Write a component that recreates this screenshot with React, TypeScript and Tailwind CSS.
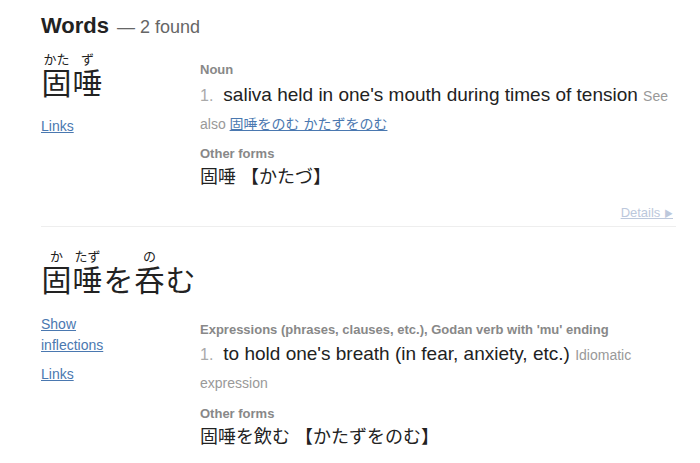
const latin = "font-['Liberation_Sans','Noto_Sans_CJK_JP',sans-serif]";

type Ruby = { kanji: string; kana?: string };

const entry1: Ruby[] = [
  { kanji: "固", kana: "かた" },
  { kanji: "唾", kana: "ず" },
];

const entry2: Ruby[] = [
  { kanji: "固", kana: "か" },
  { kanji: "唾", kana: "たず" },
  { kanji: "を" },
  { kanji: "呑", kana: "の" },
  { kanji: "む" },
];

const Word = ({ parts }: { parts: Ruby[] }) => (
  <div className="flex">
    {parts.map((p, i) => (
      <div key={i} className="flex w-[31px] flex-col items-center">
        <span className="h-[14px] whitespace-nowrap text-[13px] leading-[13px] text-[#222]">
          {p.kana ?? ""}
        </span>
        <span className="mt-[2px] text-[30px] leading-[30px] text-[#222]">{p.kanji}</span>
      </div>
    ))}
  </div>
);

const Label = ({ children }: { children: React.ReactNode }) => (
  <div className="text-[13px] font-bold leading-[18px] text-[#888]">{children}</div>
);

const A = ({ children }: { children: React.ReactNode }) => (
  <a className="text-[#4a78b0] underline decoration-[#4a78b0]">{children}</a>
);

export default function App() {
  return (
    <div className={`${latin} w-[700px] h-[463px] overflow-hidden bg-white pl-[41px] text-[#222]`}>
      <h1 className="pt-[13px] text-[22px] leading-[26px]">
        <span className="font-bold">Words</span>
        <span className="ml-[3px] text-[18px] text-[#666]"> — 2 found</span>
      </h1>

      {/* entry 1 */}
      <div className="mt-[13px] flex w-[635px]">
        <div className="w-[159px] shrink-0">
          <Word parts={entry1} />
          <div className="mt-[17px] text-[14px] leading-[20px]">
            <A>Links</A>
          </div>
        </div>
        <div className="w-[476px] pt-[8px]">
          <Label>Noun</Label>
          <div className="mt-[2px] text-[19px] leading-[28px]">
            <span className="mr-[10px] text-[16px] leading-none text-[#aaa]">1.</span>
            <span>saliva held in one's mouth during times of tension</span>{" "}
            <span className="text-[14px] leading-none text-[#999]">
              See also <A>固唾をのむ かたずをのむ</A>
            </span>
          </div>
          <div className="mt-[8px]">
            <Label>Other forms</Label>
          </div>
          <div className="text-[18px] leading-[28px]">固唾 【かたづ】</div>
          <div className="mt-[14px] flex justify-end pr-[3px] text-[13px] leading-[16px]">
            <a className="text-[#bcc8dc] underline decoration-[#bcc8dc]">
              Details <span className="text-[9px]">▶</span>
            </a>
          </div>
        </div>
      </div>
      <div className="mt-[4px] w-[635px] border-t border-[#eee]" />

      {/* entry 2 */}
      <div className="mt-[23px]">
        <Word parts={entry2} />
      </div>
      <div className="mt-[18px] flex w-[635px]">
        <div className="w-[159px] shrink-0 text-[14px] leading-[21px]">
          <div>
            <A>Show</A>
          </div>
          <div>
            <A>inflections</A>
          </div>
          <div className="mt-[8px]">
            <A>Links</A>
          </div>
        </div>
        <div className="w-[476px] pt-[7px]">
          <Label>Expressions (phrases, clauses, etc.), Godan verb with 'mu' ending</Label>
          <div className="mt-[1px] text-[19px] leading-[28px]">
            <span className="mr-[10px] text-[16px] leading-none text-[#aaa]">1.</span>
            <span>to hold one's breath (in fear, anxiety, etc.)</span>{" "}
            <span className="text-[14px] leading-none text-[#999]">Idiomatic expression</span>
          </div>
          <div className="mt-[9px]">
            <Label>Other forms</Label>
          </div>
          <div className="text-[18px] leading-[28px]">固唾を飲む 【かたずをのむ】</div>
        </div>
      </div>
    </div>
  );
}
